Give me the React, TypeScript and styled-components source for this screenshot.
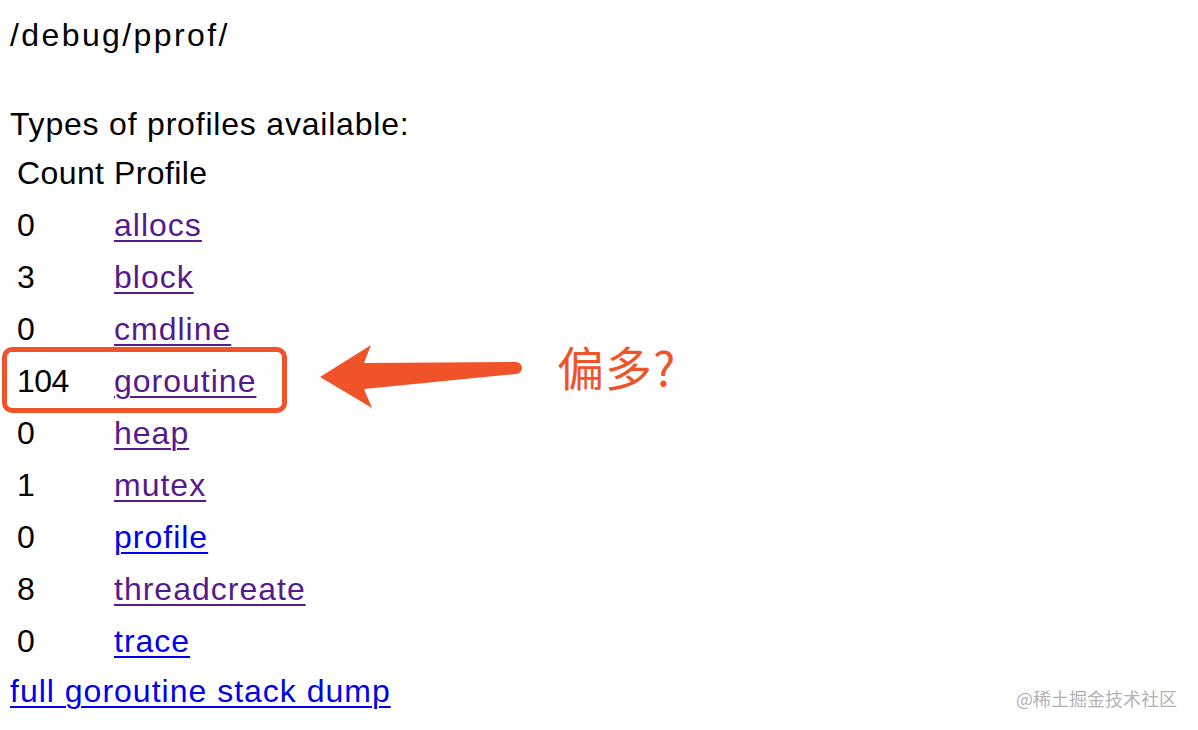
import React from 'react';
import styled, { createGlobalStyle } from 'styled-components';

interface Profile {
  count: number,
  name: string,
  visited?: boolean
}

const profiles: Profile[] = [
  { count: 0, name: 'allocs', visited: true },
  { count: 3, name: 'block', visited: true },
  { count: 0, name: 'cmdline', visited: true },
  { count: 104, name: 'goroutine', visited: true },
  { count: 0, name: 'heap', visited: true },
  { count: 1, name: 'mutex', visited: true },
  { count: 0, name: 'profile' },
  { count: 8, name: 'threadcreate', visited: true },
  { count: 0, name: 'trace' },
];

const GlobalStyle = createGlobalStyle`
  html, body {
    margin: 0;
    padding: 0;
    background: #ffffff;
  }
`;

const Page = styled.div`
  position: relative;
  display: flex;
  flex-direction: column;
  align-items: flex-start;
  width: 1198px;
  height: 730px;
  overflow: hidden;
  padding: 11px 0 0 10px;
  box-sizing: border-box;
  font-family: "Liberation Sans", Arial, sans-serif;
  font-size: 32px;
  letter-spacing: 0.8px;
  color: #000;
`;

const Title = styled.div`
  height: 48px;
  line-height: 48px;
  letter-spacing: 2.4px;
  margin-bottom: 40px;
`;

const Heading = styled.div`
  height: 50px;
  line-height: 50px;
  white-space: nowrap;
`;

const Table = styled.div`
  display: grid;
  grid-template-columns: 97px auto;
  grid-auto-rows: 52px;
  padding-left: 7px;
  margin-top: -2px;
`;

const Cell = styled.div`
  line-height: 52px;
  white-space: nowrap;
  letter-spacing: 0.4px;
`;

const Count = styled(Cell)`
  letter-spacing: -0.6px;
`;

const Link = styled.a<{ $visited?: boolean }>`
  color: ${(p) => (p.$visited ? '#551a8b' : '#0000ee')};
  text-decoration: underline;
  text-decoration-thickness: 2px;
  text-underline-offset: 4px;
  letter-spacing: 1px;
`;

const Footer = styled.div`
  height: 48px;
  line-height: 48px;
  white-space: nowrap;
  letter-spacing: 0.4px;
`;

const Highlight = styled.div`
  position: absolute;
  left: 2px;
  top: 347px;
  width: 285px;
  height: 66px;
  box-sizing: border-box;
  border: 5px solid #f0532a;
  border-radius: 10px;
`;

const ArrowSvg = styled.svg`
  position: absolute;
  left: 310px;
  top: 335px;
`;

const Note = styled.div`
  position: absolute;
  left: 557px;
  top: 336px;
  font-family: "Noto Sans CJK SC", "Liberation Sans", sans-serif;
  font-size: 47px;
  line-height: 60px;
  letter-spacing: 1px;
  color: #f0532a;
`;

const Watermark = styled.div`
  position: absolute;
  left: 1016px;
  top: 686px;
  font-family: "Noto Sans CJK SC", "Liberation Sans", sans-serif;
  font-size: 18px;
  line-height: 24px;
  letter-spacing: 0;
  color: #b3b3b3;
`;

const App = () => {
  return (
    <Page>
      <GlobalStyle />
      <Title>/debug/pprof/</Title>
      <Heading>Types of profiles available:</Heading>
      <Table>
        <Cell>Count</Cell>
        <Cell>Profile</Cell>
        {profiles.map((p) => (
          <React.Fragment key={p.name}>
            <Count>{p.count}</Count>
            <Cell>
              <Link href="#" $visited={p.visited}>{p.name}</Link>
            </Cell>
          </React.Fragment>
        ))}
      </Table>
      <Footer>
        <Link href="#">full goroutine stack dump</Link>
      </Footer>

      {/* annotation layer */}
      <Highlight />
      <ArrowSvg width="220" height="85" viewBox="0 0 220 85">
        <path
          d="M10 42 L61 10 L54 28 L206 27 A6 6 0 0 1 206 39 L54 54 L62 73 Z"
          fill="#f0532a"
        />
      </ArrowSvg>
      <Note>偏多?</Note>
      <Watermark>@稀土掘金技术社区</Watermark>
    </Page>
  );
};

export default App;
